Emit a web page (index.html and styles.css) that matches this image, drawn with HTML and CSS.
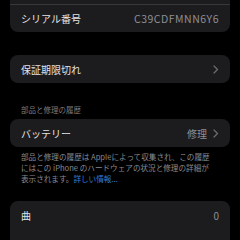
FILE: index.html
```html
<!DOCTYPE html>
<html lang="ja">
<head>
  <meta charset="UTF-8">
  <meta name="viewport" content="width=device-width, initial-scale=1.0">
  <title>情報</title>
  <link rel="stylesheet" href="styles.css">
</head>
<body>
  <div class="page">
    <div class="group first">
      <div class="row"></div>
      <div class="row">
        <span class="label">シリアル番号</span>
        <span class="value serial">C39CDFMNN6Y6</span>
      </div>
    </div>

    <div class="group">
      <div class="row">
        <span class="label">保証期限切れ</span>
        <svg class="chevron" width="6" height="9" viewBox="0 0 6 9"><polyline points="1,1 4.5,4.5 1,8" fill="none" stroke="#6b6b70" stroke-width="1.3" stroke-linecap="round" stroke-linejoin="round"/></svg>
      </div>
    </div>

    <div class="section-title">部品と修理の履歴</div>
    <div class="group">
      <div class="row">
        <span class="label">バッテリー</span>
        <span class="value">修理</span>
        <svg class="chevron" width="6" height="9" viewBox="0 0 6 9"><polyline points="1,1 4.5,4.5 1,8" fill="none" stroke="#6b6b70" stroke-width="1.3" stroke-linecap="round" stroke-linejoin="round"/></svg>
      </div>
    </div>
    <p class="footer">部品と修理の履歴は Appleによって収集され、この履歴にはこの iPhone のハードウェアの状況と修理の詳細が表示されます。<a href="#">詳しい情報...</a></p>

    <div class="group last">
      <div class="row">
        <span class="label">曲</span>
        <span class="value">0</span>
      </div>
    </div>
  </div>
</body>
</html>
```

FILE: styles.css
```css
body {
  margin: 0;
  background: #000;
  font-family: "Noto Sans CJK JP", "Noto Sans", sans-serif;
  width: 240px;
  height: 240px;
  overflow: hidden;
}
.page {
  padding: 0 10px;
  margin-top: -24px;
}
.group {
  background: #1c1c1e;
  border-radius: 8px;
  margin-top: 23px;
}
.group.first {
  margin-top: 0;
}
.group.last {
  margin-top: 17px;
  padding-bottom: 20px;
}
.row {
  height: 28px;
  display: flex;
  align-items: center;
  gap: 6px;
  padding: 0 11px;
  box-sizing: border-box;
  border-top: 0.5px solid #38383a;
}
.row:first-child {
  border-top: none;
}
.label {
  flex: 1;
  font-size: 10px;
  color: #e4e4e6;
}
.value {
  font-size: 10px;
  color: #8e8e93;
}
.serial {
  font-size: 10.5px;
  letter-spacing: 0.5px;
}
.chevron {
  display: block;
}
.section-title {
  margin: 22px 0 0;
  padding: 0 11px;
  font-size: 7.5px;
  line-height: 10px;
  color: #7b7b80;
}
.group + .section-title + .group {
  margin-top: 4px;
}
.footer {
  margin: 4px 0 0;
  padding: 0 18px 0 11px;
  font-size: 7.6px;
  line-height: 11px;
  color: #8a8a8f;
}
.footer a {
  color: #2f7fdc;
  text-decoration: none;
}
```
